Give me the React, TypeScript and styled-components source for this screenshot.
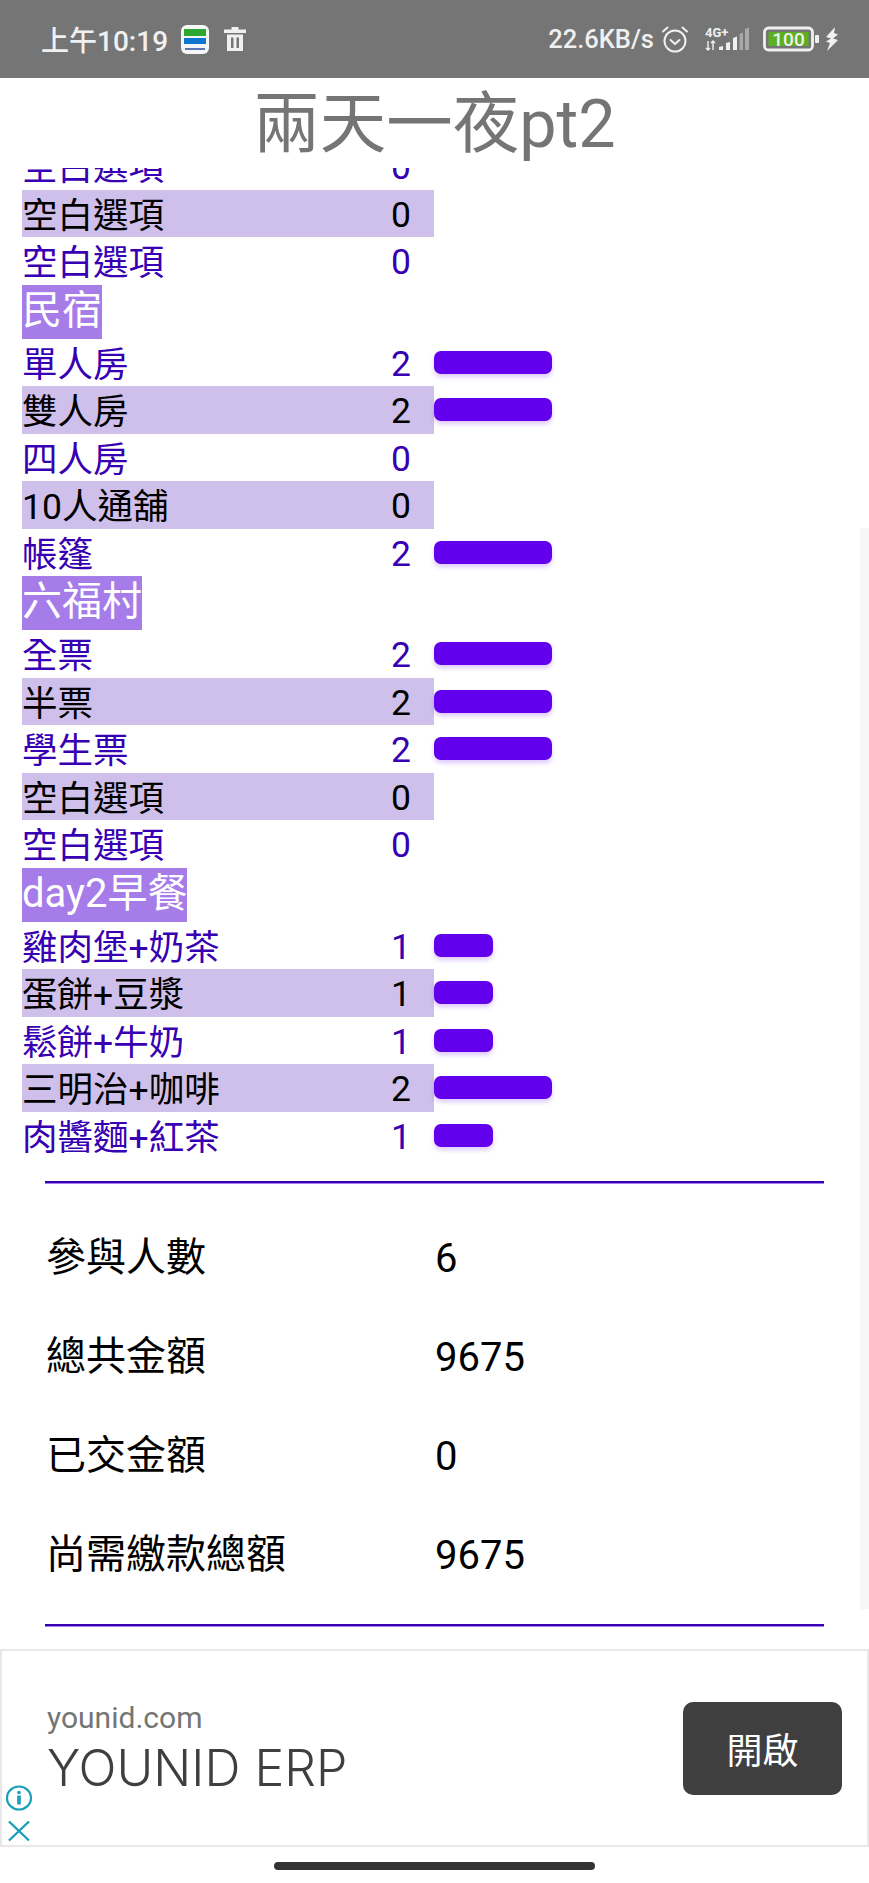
import { Fragment } from "react";
import styled, { createGlobalStyle } from "styled-components";

const GlobalStyle = createGlobalStyle`
  html, body {
    margin: 0;
    padding: 0;
    background: #fff;
  }
  * {
    box-sizing: border-box;
  }
`;

const FONT = `Roboto, "Noto Sans CJK TC", sans-serif`;

const Screen = styled.div`
  position: relative;
  width: 869px;
  height: 1883px;
  display: flex;
  flex-direction: column;
  overflow: hidden;
  background: #fff;
  font-family: ${FONT};
`;
const StatusBar = styled.div`
  height: 78px;
  flex: none;
  display: flex;
  align-items: center;
  justify-content: space-between;
  padding: 0 30px 0 41px;
  background: #757575;
  color: #f0f0f0;
`;
const StatusGroup = styled.div`
  display: flex;
  align-items: center;
`;
const Time = styled.span`
  font-size: 28px;
  font-weight: 500;
  margin-right: 13px;
`;
const Speed = styled.span`
  font-size: 25.5px;
  font-weight: 500;
  margin-right: 7px;
`;
const Title = styled.h1`
  margin: 0;
  height: 90px;
  flex: none;
  font-size: 66.5px;
  font-weight: 400;
  line-height: 92px;
  text-align: center;
  color: #757575;
`;
const ListClip = styled.div`
  height: 1013px;
  flex: none;
  overflow: hidden;
`;
const List = styled.div`
  margin: -26px 0 0 22px;
`;
const Row = styled.div`
  height: 47.5px;
  display: flex;
  align-items: center;
  font-size: 35.5px;
`;
const RowBody = styled.div<{ $zebra: boolean }>`
  width: 412px;
  height: 100%;
  display: flex;
  align-items: center;
  justify-content: space-between;
  padding-right: 23px;
  background: ${(p) => (p.$zebra ? "#cfbfeb" : "transparent")};
  color: ${(p) => (p.$zebra ? "#000" : "#3700b3")};
`;
const RowLabel = styled.span`
  padding-bottom: 2px;
`;
const Count = styled.span`
  padding-top: 3px;
`;
const Bar = styled.div`
  height: 23px;
  border-radius: 7px;
  background: #6200ee;
  box-shadow: 0 3px 5px rgba(98, 0, 238, 0.22);
`;
const SectionHeader = styled.div`
  width: fit-content;
  height: 54px;
  line-height: 52px;
  font-size: 40px;
  color: #fff;
  background: #a67ce8;
`;
const Divider = styled.div`
  height: 2px;
  flex: none;
  margin: 0 45px;
  background: #3700b3;
  box-shadow: 0 1px 0 #a77ef0;
`;
const Summary = styled.div`
  flex: none;
  height: 441px;
  padding: 24px 45px 0 46px;
  display: grid;
  grid-template-columns: 389px 1fr;
  grid-auto-rows: 99px;
  align-items: center;
  font-size: 40px;
  color: #000;
`;
const SummaryLabel = styled.span`
  padding-bottom: 5px;
`;
const SummaryValue = styled.span`
  padding-top: 3px;
`;
const Scrollbar = styled.div`
  position: absolute;
  top: 528px;
  right: 0;
  width: 9px;
  height: 1081px;
  background: #f6f6f6;
`;
const Ad = styled.div`
  position: relative;
  height: 198px;
  flex: none;
  margin-top: 23px;
  display: flex;
  align-items: center;
  justify-content: space-between;
  padding: 0 25px 0 45px;
  border: 2px solid #e8e8e8;
`;
const AdText = styled.div`
  display: flex;
  flex-direction: column;
  margin-top: 2px;
`;
const AdDomain = styled.span`
  font-size: 30px;
  line-height: 38px;
  color: #757575;
`;
const AdName = styled.span`
  font-family: Inter, Roboto, sans-serif;
  font-size: 50px;
  line-height: 62px;
  font-weight: 300;
  color: #3f3f3f;
`;
const AdButton = styled.div`
  width: 159px;
  height: 93px;
  margin-top: 0;
  border-radius: 10px;
  display: flex;
  align-items: center;
  justify-content: center;
  font-size: 36px;
  color: #fff;
  background: #3f3f3f;
`;
const AdIcons = styled.div`
  position: absolute;
  left: 3px;
  bottom: 2px;
  display: flex;
  flex-direction: column;
  gap: 8px;
`;
const HomeBar = styled.div`
  width: 321px;
  height: 8px;
  flex: none;
  margin: 15px auto 0;
  border-radius: 4px;
  background: #333;
`;

type Item =
  | { kind: "section"; label: string }
  | { kind: "row"; label: string; count: number };

const sec = (label: string): Item => ({ kind: "section", label });
const row = (label: string, count: number): Item => ({ kind: "row", label, count });

const items: Item[] = [
  row("空白選項", 0),
  row("空白選項", 0),
  row("空白選項", 0),
  sec("民宿"),
  row("單人房", 2),
  row("雙人房", 2),
  row("四人房", 0),
  row("10人通舖", 0),
  row("帳篷", 2),
  sec("六福村"),
  row("全票", 2),
  row("半票", 2),
  row("學生票", 2),
  row("空白選項", 0),
  row("空白選項", 0),
  sec("day2早餐"),
  row("雞肉堡+奶茶", 1),
  row("蛋餅+豆漿", 1),
  row("鬆餅+牛奶", 1),
  row("三明治+咖啡", 2),
  row("肉醬麵+紅茶", 1),
];

const totals = [
  ["參與人數", "6"],
  ["總共金額", "9675"],
  ["已交金額", "0"],
  ["尚需繳款總額", "9675"],
];

function AppBadge() {
  return (
    <svg width="28" height="29" viewBox="0 0 28 29" style={{ marginRight: 15 }}>
      <rect width="28" height="29" rx="6" fill="#f6f8f8" />
      <rect x="3" y="4" width="22" height="7" fill="#2fa82f" />
      <rect x="3" y="13" width="22" height="6" fill="#0f76d0" />
      <rect x="4" y="23" width="20" height="2" fill="#5a78b8" />
    </svg>
  );
}

function TrashIcon() {
  return (
    <svg width="22" height="24" viewBox="0 0 22 24" fill="#f0f0f0">
      <path d="M7.5 0h7v2.5H22V6H0V2.5h7.5z" />
      <path d="M3 7.5h16V24H3zM7 10.5v10.500h2.500v-10.500zM12.500 10.500v10.500H15v-10.500z" fillRule="evenodd" />
    </svg>
  );
}

function AlarmIcon() {
  return (
    <svg width="28" height="28" viewBox="0 0 28 28" fill="none" stroke="#f0f0f0" strokeWidth="2" strokeLinecap="round" strokeLinejoin="round">
      <circle cx="14" cy="16" r="10.500" />
      <path d="M9.500 15l4.500 4 4.500-4" />
      <path d="M2 6.500L6.500 2.500M26 6.500L21.500 2.500" />
    </svg>
  );
}

function SignalIcon() {
  return (
    <svg width="46" height="26" viewBox="0 0 46 26" style={{ marginLeft: 16 }}>
      <text x="0" y="11" fontSize="13" fontWeight="700" fontFamily="Roboto, sans-serif" fill="#f0f0f0">4G+</text>
      <path d="M3 15v9M1 22l2 2 2-2M8 24v-9M6 17l2-2 2 2" stroke="#f0f0f0" strokeWidth="1.400" fill="none" />
      <path d="M14 24v-3l4-1v4zM21 24v-7l4-1v8zM28 24V12l4-1.500V24z" fill="#f0f0f0" />
      <path d="M34.500 24V8l3.500-1.500V24zM40 24V3l4-1.500V24z" fill="#a8a8a8" />
    </svg>
  );
}

function BatteryIcon() {
  return (
    <svg width="58" height="26" viewBox="0 0 58 26" style={{ marginLeft: 12 }}>
      <rect x="1.500" y="2" width="48" height="22" rx="4" fill="none" stroke="#f0f0f0" strokeWidth="2.800" />
      <rect x="5.500" y="6" width="40" height="14" fill="#5cb01f" />
      <rect x="52" y="9" width="4" height="8" rx="1" fill="#f0f0f0" />
      <text x="25.500" y="20" fontSize="19" fontWeight="500" textAnchor="middle" fontFamily="Roboto, sans-serif" fill="#f0f0f0">100</text>
    </svg>
  );
}

function BoltIcon() {
  return (
    <svg width="14" height="24" viewBox="0 0 14 24" fill="#f0f0f0" style={{ marginLeft: 4 }}>
      <path d="M10 0L1 10l5 1.500-5 3 4 1.500-3 8 11-11-5-1.500 5-4-4-1.500z" />
    </svg>
  );
}

function InfoIcon() {
  return (
    <svg width="28" height="26" viewBox="0 0 28 26" fill="none">
      <ellipse cx="14" cy="13" rx="12" ry="11.500" stroke="#1a9fb8" strokeWidth="2.200" />
      <circle cx="14" cy="7.500" r="1.800" fill="#1a9fb8" />
      <rect x="12.200" y="10.500" width="3.600" height="9" fill="#1a9fb8" />
    </svg>
  );
}

function CloseIcon() {
  return (
    <svg width="28" height="24" viewBox="0 0 28 24" fill="none" stroke="#1a9fb8" strokeWidth="2.400">
      <path d="M4 2.500l20 19M24 2.500l-20 19" />
    </svg>
  );
}

export default function App() {
  let zebra = false;
  return (
    <Screen>
      <GlobalStyle />
      <StatusBar>
        <StatusGroup>
          <Time>上午10:19</Time>
          <AppBadge />
          <TrashIcon />
        </StatusGroup>
        <StatusGroup>
          <Speed>22.6KB/s</Speed>
          <AlarmIcon />
          <SignalIcon />
          <BatteryIcon />
          <BoltIcon />
        </StatusGroup>
      </StatusBar>
      <Title>兩天一夜pt2</Title>
      <ListClip>
        <List>
          {items.map((item, i) => {
            if (item.kind === "section") {
              zebra = false;
              return <SectionHeader key={i}>{item.label}</SectionHeader>;
            }
            const striped = zebra;
            zebra = !zebra;
            return (
              <Row key={i}>
                <RowBody $zebra={striped}>
                  <RowLabel>{item.label}</RowLabel>
                  <Count>{item.count}</Count>
                </RowBody>
                {item.count > 0 && <Bar style={{ width: item.count * 59 }} />}
              </Row>
            );
          })}
        </List>
      </ListClip>
      <Divider />
      <Summary>
        {totals.map(([label, value]) => (
          <Fragment key={label}>
            <SummaryLabel>{label}</SummaryLabel>
            <SummaryValue>{value}</SummaryValue>
          </Fragment>
        ))}
      </Summary>
      <Divider />
      <Ad>
        <AdText>
          <AdDomain>younid.com</AdDomain>
          <AdName>YOUNID ERP</AdName>
        </AdText>
        <AdButton>開啟</AdButton>
        <AdIcons>
          <InfoIcon />
          <CloseIcon />
        </AdIcons>
      </Ad>
      <HomeBar />
      <Scrollbar />
    </Screen>
  );
}
